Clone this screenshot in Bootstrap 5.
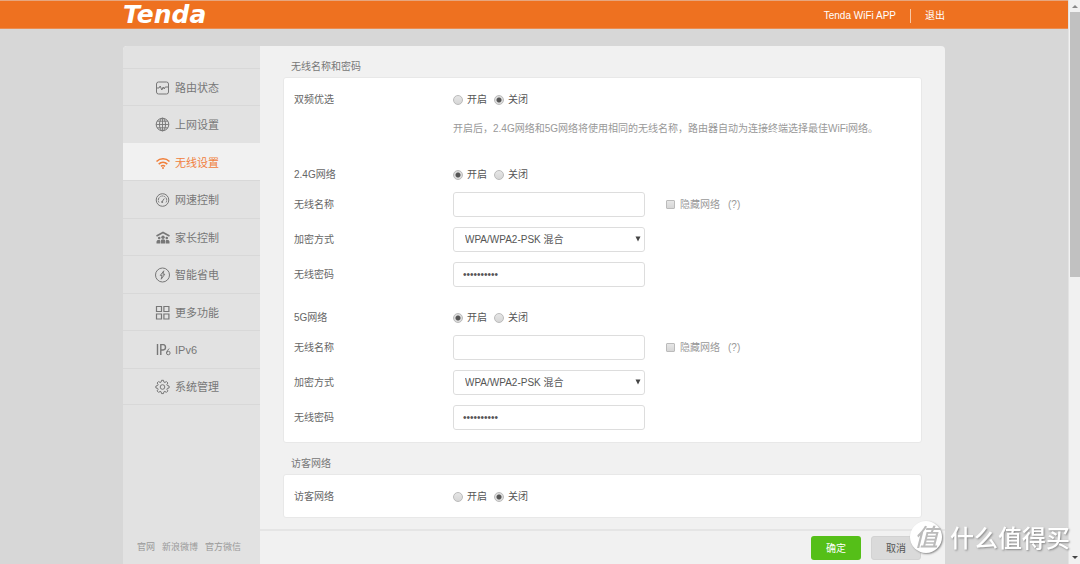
<!DOCTYPE html>
<html lang="zh-CN">
<head>
<meta charset="utf-8">
<meta name="viewport" content="width=device-width, initial-scale=1">
<title>Tenda - 无线设置</title>
<link href="https://cdn.jsdelivr.net/npm/bootstrap@5.3.0/dist/css/bootstrap.min.css" rel="stylesheet">
<style>
  body { font-family: "Liberation Sans", "Noto Sans CJK SC", sans-serif; font-size: 10px; line-height: 20px; color: #666; background: #d7d7d7; }
  .topbar { background: #ee7120; height: 29px; border-top: 1px solid #e6a67f; border-bottom: 1px solid #e98d52; }
  .shell { width: 100%; max-width: 822px; }
  .brand-logo { font: italic bold 25px/27px "DejaVu Sans", sans-serif; color: #fff; }
  .toplinks { padding-top: 2px; }
  .toplinks a { color: #fff; line-height: 14px; }
  .toplinks a + a { border-left: 1px solid #f8c8a6; padding-left: 14px; margin-left: 14px; }
  .frame-box { margin-top: 17px; border-radius: 4px 4px 0 0; background: #f1f1f1; }
  .sidebar { width: 137px; background: #e2e2e2; border-radius: 4px 0 0 0; padding-top: 22px; }
  .sidebar .nav-link { height: 37px; padding: 1px 0 0 32px; gap: 4px; font-size: 11px; color: #777; border-top: 1px solid #d8d8d8; }
  .sidebar li:nth-child(even) .nav-link { height: 38px; }
  .sidebar li:last-child .nav-link { border-bottom: 1px solid #d8d8d8; }
  .sidebar .nav-link.active { background: #f1f1f1; color: #f0803c; border-color: #f1f1f1; }
  .sidebar svg { width: 16px; height: 16px; fill: none; stroke: currentColor; flex: none; }
  .minor-links { font-size: 9px; gap: 7px; padding: 0 0 7px 14px; }
  .minor-links a { color: #999; }
  .settings { padding: 11px 23px 0; }
  .settings h2 { font-size: 10px; line-height: 20px; margin: 0; padding-left: 8px; font-weight: 400; color: #777; }
  .panel { background: #fff; border: 1px solid #e8e8e8; border-radius: 3px; padding: 9px 10px 8px; margin-bottom: 11px; }
  .line { height: 25px; }
  .line-name { width: 159px; flex: none; }
  .line label.opt { margin-left: 4px; margin-right: 7px; color: #555; }
  .line label.dim, .dim { color: #999; }
  .net { display: grid; row-gap: 10px; }
  .net .line:first-child { margin-bottom: -5px; }
  .net + .net { margin-top: 18px; }
  .help { margin: 7px 0 23px 159px; color: #999; }
  .tick { appearance: none; width: 10px; height: 10px; margin: 0; flex: none; border: 1px solid #bbb; background: linear-gradient(#e6e6e6, #d6d6d6); }
  .tick[type=radio] { border-radius: 50%; }
  .tick[type=radio]:checked { background: radial-gradient(circle, #555 0 2px, #ddd 3px); }
  .tick[type=checkbox] { width: 9px; height: 9px; border-radius: 1px; margin-left: 21px; margin-right: 5px; }
  .field { width: 192px; }
  .field .form-control, .field .form-select { height: 25px; min-height: 25px; padding: 0 9px; font-size: 10px; line-height: 23px; border: 1px solid #ddd; border-radius: 3px; color: #555; background: #fff; }
  .field .form-select { padding-left: 11px; }
  .caret { right: 4px; top: 9px; width: 6px; height: 6px; fill: #444; pointer-events: none; }
  .actions { border-top: 2px solid #e5e5e5; padding: 5px 24px 4px; gap: 10px; }
  .actions .btn { width: 50px; height: 24px; padding: 0; font-size: 10px; border-radius: 3px; }
  .btn-ok { background: #55bf18; color: #fff; }
  .btn-drop { background: #dadada; border-color: #d2d2d2; color: #555; }
  .scroller { width: 12px; background: #f1f1f1; border-left: 1px solid #e3e3e3; }
  .thumb { width: 10px; height: 47%; background: #c1c1c1; }
  .scroller svg { width: 6px; height: 12px; flex: none; }
  .stamp { right: 10px; bottom: 10px; gap: 8px; color: #fff; font-family: "Noto Sans CJK SC", sans-serif; font-weight: 500; font-size: 24px; line-height: 34px; pointer-events: none; text-shadow: 1px 1px 2px #888; }
  .stamp-disc { width: 32px; height: 32px; line-height: 30px; font-style: italic; border-radius: 50%; background: #fff; color: #bbb; text-shadow: none; box-shadow: 1px 1px 2px #888; }
</style>
</head>
<body>
<div class="d-flex vh-100 overflow-hidden">
  <div class="d-flex flex-column flex-grow-1">
    <header class="topbar">
      <div class="shell mx-auto d-flex justify-content-between align-items-center">
        <a href="#" class="brand-logo text-decoration-none">Tenda</a>
        <nav class="toplinks d-flex">
          <a href="#" class="text-decoration-none">Tenda WiFi APP</a>
          <a href="#" class="text-decoration-none">退出</a>
        </nav>
      </div>
    </header>
    <div class="shell frame-box mx-auto d-flex flex-grow-1 overflow-hidden">
      <aside class="sidebar d-flex flex-column justify-content-between">
        <ul class="nav flex-column">
          <li><a class="nav-link d-flex align-items-center" href="#"><svg viewBox="0 0 16 16"><rect x="1.500" y="2" width="12" height="12" rx="2"/><path d="M2 8h2l1.200-2 1.600 4L8.200 7l1 2 1-2h3"/></svg>路由状态</a></li>
          <li><a class="nav-link d-flex align-items-center" href="#"><svg viewBox="0 0 16 16"><circle cx="7.500" cy="7.500" r="6.300"/><ellipse cx="7.500" cy="7.500" rx="3" ry="6.300"/><path d="M1.200 7.500h12.600M7.500 1.200v12.600M2.200 4.200h10.600M2.200 10.800h10.600" stroke-width=".9"/></svg>上网设置</a></li>
          <li><a class="nav-link active d-flex align-items-center" href="#" aria-current="page"><svg viewBox="0 0 16 16"><path d="M1.500 6.500c3.700-3.600 9.300-3.600 13 0M3.700 9.100c2.500-2.300 6.100-2.300 8.600 0M6 11.300c1.300-1 2.700-1 4 0" stroke-width="1.600"/><circle cx="8" cy="13" r="1" fill="currentColor" stroke="none"/></svg>无线设置</a></li>
          <li><a class="nav-link d-flex align-items-center" href="#"><svg viewBox="0 0 16 16"><circle cx="7.500" cy="8" r="6.300"/><path d="M4 10.500a4.200 4.200 0 1 1 7 0" stroke-dasharray="2 .6"/><path d="M7.200 9.500 9.300 6.500"/><circle cx="7.200" cy="10" r="1" fill="currentColor" stroke="none"/></svg>网速控制</a></li>
          <li><a class="nav-link d-flex align-items-center" href="#"><svg viewBox="0 0 16 16"><path d="M1.500 6 8 2.500 14.500 6" stroke-width="1.600"/><g fill="currentColor" stroke="none"><circle cx="8" cy="7.200" r="1.700"/><circle cx="4.200" cy="8" r="1.300"/><circle cx="11.800" cy="8" r="1.300"/><path d="M5.600 13.500V11q0-1.800 2.400-1.800t2.400 1.800v2.500zM1.500 13.500v-2q0-1.600 2.700-1.700.8 0 .8.600v3.100zM14.500 13.500v-2q0-1.600-2.700-1.700-.8 0-.8.600v3.100z"/></g></svg>家长控制</a></li>
          <li><a class="nav-link d-flex align-items-center" href="#"><svg viewBox="0 0 16 16"><circle cx="7.500" cy="8" r="7"/><path d="M8.800 3.800 5.300 8.400h1.800l-.9 3.800 3.600-5H7.900z"/></svg>智能省电</a></li>
          <li><a class="nav-link d-flex align-items-center" href="#"><svg viewBox="0 0 16 16"><path d="M1.500 1.500h5v5h-5zM8.900 1.500h5v5h-5zM1.500 9h5v5h-5zM8.900 9h5v5h-5z" stroke-width="1.200"/></svg>更多功能</a></li>
          <li><a class="nav-link d-flex align-items-center" href="#"><svg viewBox="0 0 16 16"><path d="M2.500 2v11M5.800 13V2.600h2.400q2.300.2 2.300 2.700T8.200 8H5.800" stroke-width="1.400"/><path d="M14.200 6.500q-2.400 2-2.600 4.500"/><circle cx="13.300" cy="11" r="1.800"/></svg><span>IPv6</span></a></li>
          <li><a class="nav-link d-flex align-items-center" href="#"><svg viewBox="0 0 16 16"><path d="m6.500 1.300h2l.4 1.800 1 .4 1.500-1 1.500 1.500-1 1.500.4 1 1.800.5v2l-1.800.4-.4 1 1 1.500-1.500 1.500-1.500-1-1 .4-.4 1.800h-2l-.4-1.800-1-.4-1.500 1-1.500-1.500 1-1.500-.4-1L.9 9V7l1.800-.5.4-1-1-1.500 1.500-1.500 1.500 1 1-.4z"/><circle cx="7.500" cy="8" r="2.300"/></svg>系统管理</a></li>
        </ul>
        <div class="minor-links d-flex">
          <a href="#" class="text-decoration-none">官网</a>
          <a href="#" class="text-decoration-none">新浪微博</a>
          <a href="#" class="text-decoration-none">官方微信</a>
        </div>
      </aside>
      <form class="d-flex flex-column flex-grow-1">
        <div class="settings flex-grow-1 overflow-hidden">
          <h2>无线名称和密码</h2>
          <section class="panel">
            <div class="line d-flex align-items-center" role="radiogroup" aria-label="双频优选">
              <span class="line-name">双频优选</span>
              <input class="tick" type="radio" name="dual" id="dual-on"><label class="opt" for="dual-on">开启</label>
              <input class="tick" type="radio" name="dual" id="dual-off" checked><label class="opt" for="dual-off">关闭</label>
            </div>
            <p class="help">开启后，2.4G网络和5G网络将使用相同的无线名称，路由器自动为连接终端选择最佳WiFi网络。</p>
            <div class="net">
              <div class="line d-flex align-items-center" role="radiogroup" aria-label="2.4G网络">
                <span class="line-name">2.4G网络</span>
                <input class="tick" type="radio" name="g2" id="g2-on" checked><label class="opt" for="g2-on">开启</label>
                <input class="tick" type="radio" name="g2" id="g2-off"><label class="opt" for="g2-off">关闭</label>
              </div>
              <div class="line d-flex align-items-center">
                <label class="line-name" for="g2-name">无线名称</label>
                <div class="field"><input class="form-control" type="text" id="g2-name"></div>
                <input class="tick" type="checkbox" id="g2-hide"><label class="dim" for="g2-hide">隐藏网络</label><span class="dim ms-2">(?)</span>
              </div>
              <div class="line d-flex align-items-center">
                <label class="line-name" for="g2-mode">加密方式</label>
                <div class="field position-relative"><select class="form-select" id="g2-mode"><option>WPA/WPA2-PSK 混合</option></select><svg class="caret position-absolute" viewBox="0 0 6 6"><path d="M.5.500h5L3 5.500z"/></svg></div>
              </div>
              <div class="line d-flex align-items-center">
                <label class="line-name" for="g2-pass">无线密码</label>
                <div class="field"><input class="form-control" type="password" id="g2-pass" value="0000000000"></div>
              </div>
            </div>
            <div class="net">
              <div class="line d-flex align-items-center" role="radiogroup" aria-label="5G网络">
                <span class="line-name">5G网络</span>
                <input class="tick" type="radio" name="g5" id="g5-on" checked><label class="opt" for="g5-on">开启</label>
                <input class="tick" type="radio" name="g5" id="g5-off"><label class="opt" for="g5-off">关闭</label>
              </div>
              <div class="line d-flex align-items-center">
                <label class="line-name" for="g5-name">无线名称</label>
                <div class="field"><input class="form-control" type="text" id="g5-name"></div>
                <input class="tick" type="checkbox" id="g5-hide"><label class="dim" for="g5-hide">隐藏网络</label><span class="dim ms-2">(?)</span>
              </div>
              <div class="line d-flex align-items-center">
                <label class="line-name" for="g5-mode">加密方式</label>
                <div class="field position-relative"><select class="form-select" id="g5-mode"><option>WPA/WPA2-PSK 混合</option></select><svg class="caret position-absolute" viewBox="0 0 6 6"><path d="M.5.500h5L3 5.500z"/></svg></div>
              </div>
              <div class="line d-flex align-items-center mb-1">
                <label class="line-name" for="g5-pass">无线密码</label>
                <div class="field"><input class="form-control" type="password" id="g5-pass" value="0000000000"></div>
              </div>
            </div>
          </section>
          <h2>访客网络</h2>
          <section class="panel">
            <div class="line d-flex align-items-center" role="radiogroup" aria-label="访客网络">
              <span class="line-name">访客网络</span>
              <input class="tick" type="radio" name="guest" id="guest-on"><label class="opt" for="guest-on">开启</label>
              <input class="tick" type="radio" name="guest" id="guest-off" checked><label class="opt" for="guest-off">关闭</label>
            </div>
          </section>
        </div>
        <div class="actions d-flex justify-content-end">
          <button type="button" class="btn btn-ok">确定</button>
          <button type="button" class="btn btn-drop">取消</button>
        </div>
      </form>
    </div>
  </div>
  <div class="scroller d-flex flex-column align-items-center" aria-hidden="true">
    <svg viewBox="0 0 6 12"><path d="M0 8h6L3 5z" fill="#888"/></svg>
    <div class="thumb"></div>
    <svg class="mt-auto" viewBox="0 0 6 12"><path d="M0 4h6L3 7z" fill="#444"/></svg>
  </div>
</div>
<div class="stamp position-fixed d-flex align-items-center">
  <span class="stamp-disc text-center">值</span><span>什么值得买</span>
</div>
<script src="https://cdn.jsdelivr.net/npm/bootstrap@5.3.0/dist/js/bootstrap.bundle.min.js"></script>
</body>
</html>
